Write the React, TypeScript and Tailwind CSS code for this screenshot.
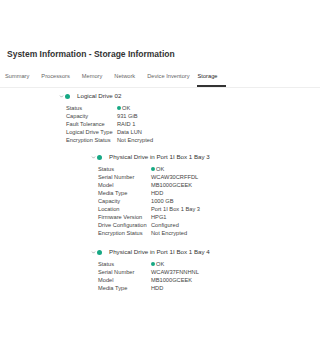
import { ChevronDown } from 'lucide-react';

type Row = [string, string, boolean?];

const logical: Row[] = [
  ['Status', 'OK', true],
  ['Capacity', '931 GiB'],
  ['Fault Tolerance', 'RAID 1'],
  ['Logical Drive Type', 'Data LUN'],
  ['Encryption Status', 'Not Encrypted'],
];

const bay3: Row[] = [
  ['Status', 'OK', true],
  ['Serial Number', 'WCAW30CRFFDL'],
  ['Model', 'MB1000GCEEK'],
  ['Media Type', 'HDD'],
  ['Capacity', '1000 GB'],
  ['Location', 'Port 1I Box 1 Bay 3'],
  ['Firmware Version', 'HPG1'],
  ['Drive Configuration', 'Configured'],
  ['Encryption Status', 'Not Encrypted'],
];

const bay4: Row[] = [
  ['Status', 'OK', true],
  ['Serial Number', 'WCAW37FNNHNL'],
  ['Model', 'MB1000GCEEK'],
  ['Media Type', 'HDD'],
];

const tabs = ['Summary', 'Processors', 'Memory', 'Network', 'Device Inventory'];

function Header({ title }: { title: string }) {
  return (
    <div className="flex items-center h-[10px]">
      <ChevronDown className="w-[5px] h-[5px] text-[#888]" strokeWidth={3} />
      <span className="ml-[1px] w-[5px] h-[5px] rounded-full bg-[#17a884]" />
      <span className="ml-[7px] text-[6.2px] leading-[10px] text-[#333]">{title}</span>
    </div>
  );
}

function Props({ rows, labelW }: { rows: Row[]; labelW: string }) {
  return (
    <div className="mt-[3px] ml-[7px] text-[5.7px] text-[#444]">
      {rows.map(([k, v, ok]) => (
        <div key={k} className="flex items-center h-[8px] leading-[8px]">
          <span className={labelW}>{k}</span>
          {ok && <span className="mr-[1px] w-[4px] h-[4px] rounded-full bg-[#17a884]" />}
          <span>{v}</span>
        </div>
      ))}
    </div>
  );
}

export default function App() {
  return (
    <div className="w-[320px] h-[351px] bg-white overflow-hidden" style={{ fontFamily: '"Liberation Sans", Arial, sans-serif' }}>
      <h1 className="pt-[47px] pl-[7px] text-[8.5px] leading-[14px] font-bold text-[#333]">
        System Information - Storage Information
      </h1>

      {/* Tabs */}
      <div className="mt-[11px] flex border-b border-[#eee] pl-[5px] text-[5.7px] leading-[9px] text-[#666]">
        {tabs.map((t) => (
          <div key={t} className="mr-[12px] h-[15px]">
            {t}
          </div>
        ))}
        <div className="-ml-[5px] pl-[1px] pr-[9px] h-[15px] border-b-2 border-[#333] text-[#222]">Storage</div>
      </div>

      {/* Tree */}
      <div className="mt-[3px] pl-[59px]">
        <Header title="Logical Drive 02" />
        <Props rows={logical} labelW="w-[51px]" />

        <div className="mt-[8px] pl-[32px]">
          <Header title="Physical Drive in Port 1I Box 1 Bay 3" />
          <Props rows={bay3} labelW="w-[53px]" />

          <div className="mt-[10px]">
            <Header title="Physical Drive in Port 1I Box 1 Bay 4" />
            <Props rows={bay4} labelW="w-[53px]" />
          </div>
        </div>
      </div>
    </div>
  );
}
